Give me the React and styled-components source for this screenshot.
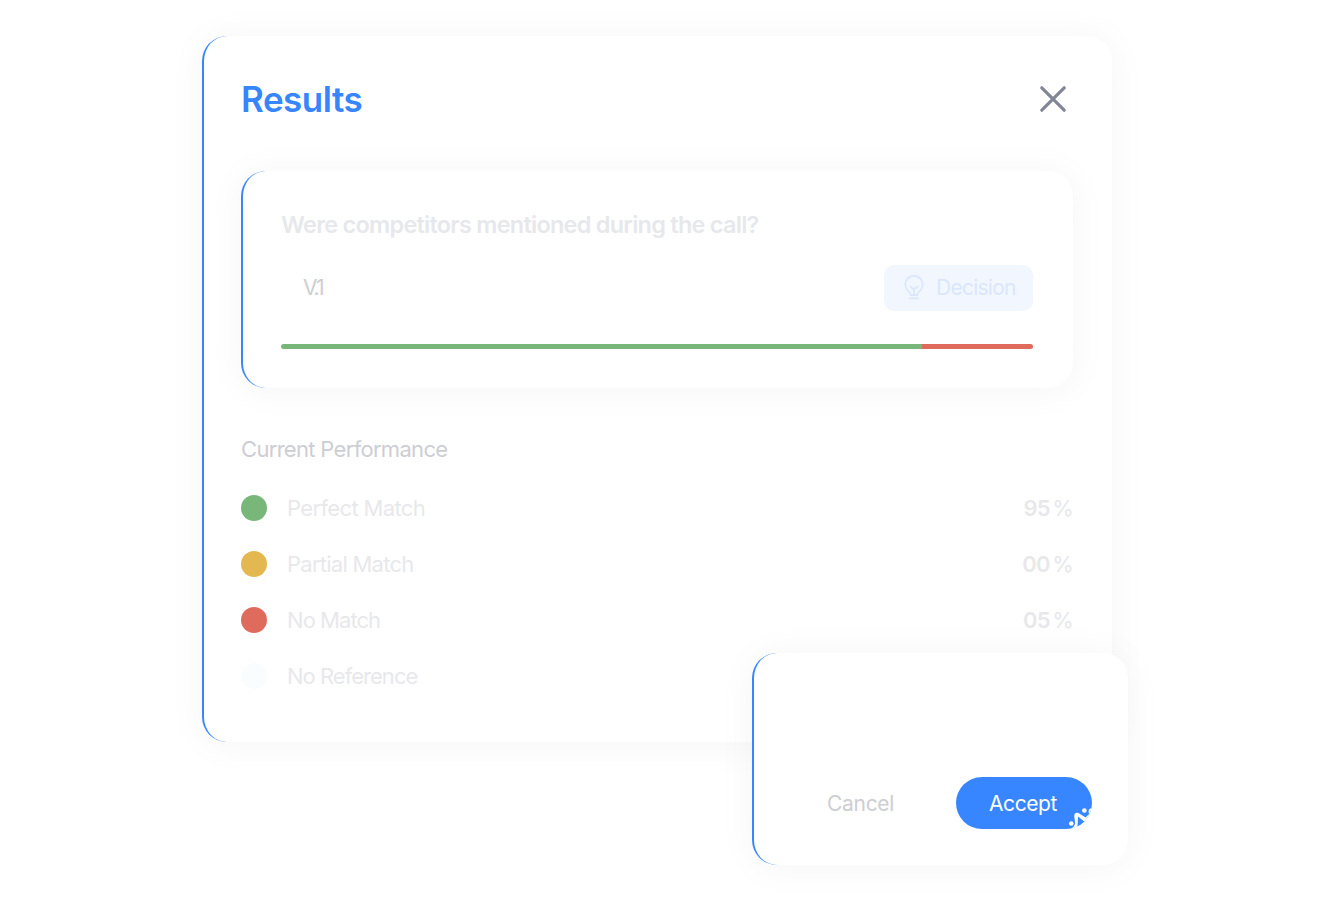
import React from 'react';
import styled, { createGlobalStyle } from 'styled-components';

const GlobalStyle = createGlobalStyle`
    body {
        margin: 0;
        background: #fff;
        font-family: Inter, 'Liberation Sans', sans-serif;
    }
    * {
        box-sizing: border-box;
    }
`;

const Page = styled.main`
    position: relative;
    width: 1332px;
    height: 900px;
    padding: 36px 0 0 202px;
    overflow: hidden;
`;

const Card = styled.section`
    background: #fff;
    border-left: 2px solid #3886ff;
    border-radius: 25px;
    box-shadow: 0 2px 40px rgba(0, 0, 0, 0.045);
`;

const Panel = styled(Card)`
    width: 910px;
    height: 706px;
    padding: 43px 39px 0 37px;
`;

const PanelHeader = styled.header`
    display: flex;
    justify-content: space-between;
    align-items: center;
    height: 40px;
    padding-right: 6px;
`;

const Title = styled.h1`
    margin: 0;
    color: #3886ff;
    font-size: 35px;
    font-weight: 600;
    line-height: 40px;
    letter-spacing: -0.5px;
`;

const CloseButton = styled.button`
    display: flex;
    padding: 0;
    border: none;
    background: none;
`;

const Question = styled(Card)`
    height: 217px;
    margin-top: 52px;
    padding: 37px 40px 0 38px;
`;

const QuestionText = styled.h2`
    margin: 0;
    color: #e7e8eb;
    font-size: 23.5px;
    font-weight: 600;
    line-height: 33px;
    letter-spacing: -0.75px;
    white-space: nowrap;
`;

const QuestionRow = styled.div`
    display: flex;
    justify-content: space-between;
    align-items: center;
    height: 46px;
    margin-top: 24px;
    padding-left: 22px;
`;

const Version = styled.span`
    color: #cdced1;
    font-size: 21px;
    line-height: 24px;
    letter-spacing: -1.9px;
`;

const Tag = styled.span`
    display: flex;
    align-items: center;
    width: 149px;
    height: 46px;
    padding-left: 20px;
    border-radius: 10px;
    background: #f2f7ff;
    color: #dae6fb;
    font-size: 21px;
    line-height: 24px;
    letter-spacing: -0.75px;

    svg {
        margin-right: 11px;
    }
`;

const Bar = styled.div`
    display: flex;
    height: 5px;
    margin-top: 33px;
    border-radius: 3px;
    overflow: hidden;
`;

const BarPart = styled.div`
    width: ${props => props.$width};
    background: ${props => props.$color};
`;

const Subtitle = styled.h3`
    margin: 47px 0 17px;
    color: #cdced4;
    font-size: 22px;
    font-weight: 400;
    line-height: 28px;
    letter-spacing: -0.69px;
`;

const Row = styled.div`
    display: flex;
    align-items: center;
    height: 56.1px;
    color: #e8e8eb;
    font-size: 22px;
    line-height: 26px;
    letter-spacing: ${props => props.$spacing || '-0.65px'};
`;

const Dot = styled.span`
    width: 26px;
    height: 26px;
    margin-right: 20px;
    border-radius: 50%;
    background: ${props => props.$color};
`;

const Percent = styled.span`
    margin-left: auto;
    letter-spacing: -0.8px;
    word-spacing: -3px;
`;

const Digits = styled.b`
    font-weight: 600;
    letter-spacing: -0.8px;
`;

const Dialog = styled(Card)`
    position: absolute;
    left: 752px;
    top: 653px;
    width: 376px;
    height: 212px;
    padding: 124px 36px 0 73px;
`;

const Actions = styled.div`
    display: flex;
    justify-content: space-between;
    align-items: center;
`;

const CancelButton = styled.button`
    padding: 0;
    border: none;
    background: none;
    color: #cdced1;
    font-family: inherit;
    font-size: 21px;
    letter-spacing: -0.3px;
`;

const AcceptButton = styled.button`
    position: relative;
    width: 136px;
    height: 52px;
    padding: 0 2px 0 0;
    border: none;
    border-radius: 26px;
    background: #3886ff;
    color: #fff;
    font-family: inherit;
    font-size: 21px;
    letter-spacing: -0.4px;
    overflow: hidden;
`;

const Cursor = styled.svg`
    position: absolute;
    right: 0;
    bottom: 0;
`;

const matches = [
    { label: 'Perfect Match', color: '#78b779', value: '95' },
    { label: 'Partial Match', color: '#e3b851', value: '00', spacing: '-0.75px' },
    { label: 'No Match', color: '#df6b5d', value: '05', spacing: '-0.95px' },
    { label: 'No Reference', color: '#fafdfd', spacing: '-0.98px' },
];

const CloseIcon = () => (
    <svg width="28" height="28" viewBox="0 0 28 28" fill="none" stroke="#828696" strokeWidth="3.2" strokeLinecap="round">
        <path d="M2.8 2.8L25.2 25.2M25.2 2.8L2.8 25.2" />
    </svg>
);

const BulbIcon = () => (
    <svg width="21" height="26" viewBox="0 0 21 26" fill="none" stroke="#dae6fb" strokeWidth="1.7" strokeLinecap="round" strokeLinejoin="round">
        <path d="M6.8 20.2C6.8 17.8 5.4 17.2 4 15.8A8.7 8.7 0 1 1 16 15.8C14.6 17.2 13.2 17.8 13.2 20.2Z" />
        <path d="M6.5 11.5L10 14.5L13.5 11.5M10 14.5V20" />
        <path d="M5.6 23.4H14.4" />
    </svg>
);

const App = () => (
    <Page>
        <GlobalStyle />
        <Panel>
            <PanelHeader>
                <Title>Results</Title>
                <CloseButton aria-label="Close"><CloseIcon /></CloseButton>
            </PanelHeader>
            <Question>
                <QuestionText>Were competitors mentioned during the call?</QuestionText>
                <QuestionRow>
                    <Version>V.1</Version>
                    <Tag><BulbIcon />Decision</Tag>
                </QuestionRow>
                <Bar>
                    <BarPart $width="85.3%" $color="#78b779" />
                    <BarPart $width="14.7%" $color="#df6b5d" />
                </Bar>
            </Question>
            <Subtitle>Current Performance</Subtitle>
            {matches.map(match => (
                <Row key={match.label} $spacing={match.spacing}>
                    <Dot $color={match.color} />
                    {match.label}
                    {match.value && <Percent><Digits>{match.value}</Digits> %</Percent>}
                </Row>
            ))}
        </Panel>
        <Dialog>
            <Actions>
                <CancelButton>Cancel</CancelButton>
                <AcceptButton>
                    Accept
                    <Cursor width="24" height="24" viewBox="0 0 24 24" fill="none">
                        <path d="M2 24Q6 22.5 7.2 18.5L6.2 11Q6.5 6.6 10.5 8L17.5 12.5L21 9H24V24Z" fill="#fff" />
                        <path d="M10 11.5L17.8 17.8L9.5 21.5Z" fill="#3886ff" />
                        <circle cx="3.3" cy="18.5" r="2.3" fill="#fff" />
                        <circle cx="16.4" cy="5.5" r="2.3" fill="#fff" />
                        <circle cx="24" cy="6.6" r="3.4" fill="#fff" />
                    </Cursor>
                </AcceptButton>
            </Actions>
        </Dialog>
    </Page>
);

export default App;
